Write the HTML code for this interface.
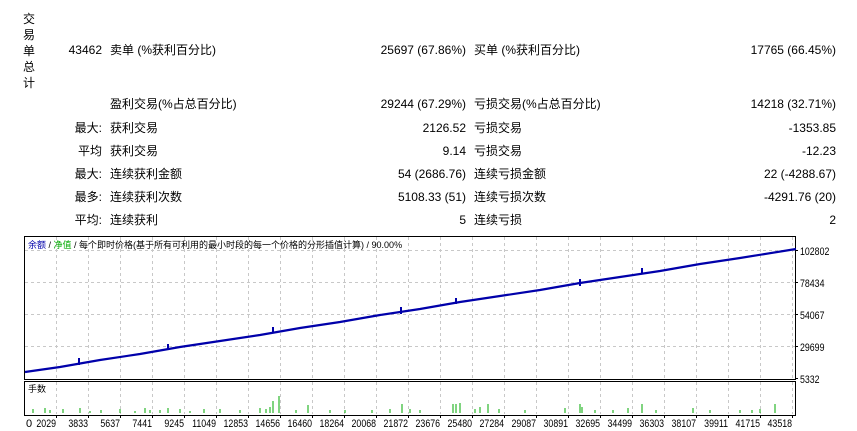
<!DOCTYPE html>
<html><head><meta charset="utf-8"><style>
body{margin:0;width:857px;height:431px;background:#fff;font-family:"Liberation Sans","Noto Sans CJK SC",sans-serif;font-size:12px;color:#000;position:relative;overflow:hidden}
.t{position:absolute;white-space:nowrap;line-height:14px}
.r{text-align:right}
.v{position:absolute;left:23px;top:11px;width:14px;line-height:16px;font-size:12px}
.x{position:absolute;top:0;width:60px;text-align:right;transform:scaleX(.8);transform-origin:right center}
.y{position:absolute;left:800px;font-size:11px;line-height:14px;transform:scaleX(.8);transform-origin:left center}
</style></head><body>
<div class="v">交<br>易<br>单<br>总<br>计</div>
<div class="t r" style="right:755px;top:43px">43462</div>
<div class="t" style="left:110px;top:43px">卖单 (%获利百分比)</div>
<div class="t r" style="right:391px;top:43px">25697 (67.86%)</div>
<div class="t" style="left:474px;top:43px">买单 (%获利百分比)</div>
<div class="t r" style="right:21px;top:43px">17765 (66.45%)</div>

<div class="t" style="left:110px;top:97px">盈利交易(%占总百分比)</div>
<div class="t r" style="right:391px;top:97px">29244 (67.29%)</div>
<div class="t" style="left:474px;top:97px">亏损交易(%占总百分比)</div>
<div class="t r" style="right:21px;top:97px">14218 (32.71%)</div>

<div class="t r" style="right:755px;top:121px">最大:</div>
<div class="t" style="left:110px;top:121px">获利交易</div>
<div class="t r" style="right:391px;top:121px">2126.52</div>
<div class="t" style="left:474px;top:121px">亏损交易</div>
<div class="t r" style="right:21px;top:121px">-1353.85</div>

<div class="t r" style="right:755px;top:144px">平均</div>
<div class="t" style="left:110px;top:144px">获利交易</div>
<div class="t r" style="right:391px;top:144px">9.14</div>
<div class="t" style="left:474px;top:144px">亏损交易</div>
<div class="t r" style="right:21px;top:144px">-12.23</div>

<div class="t r" style="right:755px;top:167px">最大:</div>
<div class="t" style="left:110px;top:167px">连续获利金额</div>
<div class="t r" style="right:391px;top:167px">54 (2686.76)</div>
<div class="t" style="left:474px;top:167px">连续亏损金额</div>
<div class="t r" style="right:21px;top:167px">22 (-4288.67)</div>

<div class="t r" style="right:755px;top:190px">最多:</div>
<div class="t" style="left:110px;top:190px">连续获利次数</div>
<div class="t r" style="right:391px;top:190px">5108.33 (51)</div>
<div class="t" style="left:474px;top:190px">连续亏损次数</div>
<div class="t r" style="right:21px;top:190px">-4291.76 (20)</div>

<div class="t r" style="right:755px;top:213px">平均:</div>
<div class="t" style="left:110px;top:213px">连续获利</div>
<div class="t r" style="right:391px;top:213px">5</div>
<div class="t" style="left:474px;top:213px">连续亏损</div>
<div class="t r" style="right:21px;top:213px">2</div>

<svg style="position:absolute;left:0;top:0" width="857" height="431">
<g stroke="#c8c8c8" stroke-dasharray="3,3" stroke-width="1">
<path d="M25 250.5H795M25 282.5H795M25 314.5H795M25 346.5H795"/>
<path d="M56.5 237V379M88.5 237V379M120.5 237V379M152.5 237V379M184.5 237V379M216.5 237V379M248.5 237V379M280.5 237V379M312.5 237V379M344.5 237V379M376.5 237V379M408.5 237V379M440.5 237V379M472.5 237V379M504.5 237V379M536.5 237V379M568.5 237V379M600.5 237V379M632.5 237V379M664.5 237V379M696.5 237V379M728.5 237V379M760.5 237V379M792.5 237V379"/>
<path d="M56.5 382V414M88.5 382V414M120.5 382V414M152.5 382V414M184.5 382V414M216.5 382V414M248.5 382V414M280.5 382V414M312.5 382V414M344.5 382V414M376.5 382V414M408.5 382V414M440.5 382V414M472.5 382V414M504.5 382V414M536.5 382V414M568.5 382V414M600.5 382V414M632.5 382V414M664.5 382V414M696.5 382V414M728.5 382V414M760.5 382V414M792.5 382V414"/>
</g>
<rect x="24.5" y="236.5" width="771" height="143" fill="none" stroke="#000"/>
<rect x="24.5" y="381.5" width="771" height="34" fill="none" stroke="#000"/>
<path d="M796 250.5h2M796 282.5h2M796 314.5h2M796 346.5h2M796 378.5h2" stroke="#000"/>
<path d="M56.5 416v2M88.5 416v2M120.5 416v2M152.5 416v2M184.5 416v2M216.5 416v2M248.5 416v2M280.5 416v2M312.5 416v2M344.5 416v2M376.5 416v2M408.5 416v2M440.5 416v2M472.5 416v2M504.5 416v2M536.5 416v2M568.5 416v2M600.5 416v2M632.5 416v2M664.5 416v2M696.5 416v2M728.5 416v2M760.5 416v2M792.5 416v2" stroke="#000"/>
<polyline fill="none" stroke="#0000aa" stroke-width="2.2" points="25,372 60,367 100,360 140,354 180,347 220,341 260,335 300,328 340,322 380,315 420,309 460,302 500,296 540,290 580,283 620,277 660,271 700,264 740,258 796,249"/>
<path d="M79 358v7M168 344v6M273 327v6M401 307v7M456 298v6M580 279v7M642 268v5" stroke="#0000aa" stroke-width="2"/>
<g stroke="#00aa00" stroke-width="1">
<path d="M33 413v-4M45 413v-5M50 413v-3M63 413v-4M80 413v-5M90 413v-2M101 413v-3M120 413v-4M135 413v-2M145 413v-5M150 413v-3M160 413v-3M168 413v-5M180 413v-4M190 413v-2M204 413v-4M220 413v-4M240 413v-3M260 413v-5M266 413v-4M270 413v-6M273 413v-12M279 413v-17M296 413v-3M308 413v-8M330 413v-3M345 413v-3M372 413v-3M390 413v-4M402 413v-9M410 413v-4M420 413v-3M453 413v-9M456 413v-9M460 413v-10M475 413v-4M480 413v-6M488 413v-9M499 413v-4M525 413v-3M565 413v-5M580 413v-9M582 413v-6M595 413v-3M613 413v-3M628 413v-5M642 413v-9M656 413v-3M693 413v-5M710 413v-3M740 413v-3M752 413v-3M760 413v-4M775 413v-9"/>
</g>
</svg>
<div class="t" style="left:28px;top:239px;font-size:9px;line-height:12px"><span style="color:#0000aa">余额</span> / <span style="color:#00aa00">净值</span> / 每个即时价格(基于所有可利用的最小时段的每一个价格的分形插值计算) / 90.00%</div>
<div class="t" style="left:28px;top:383px;font-size:9px;line-height:12px">手数</div>
<div class="y" style="top:245px">102802</div>
<div class="y" style="top:277px">78434</div>
<div class="y" style="top:309px">54067</div>
<div class="y" style="top:341px">29699</div>
<div class="y" style="top:373px">5332</div>
<div class="t" style="left:0;top:417px;font-size:11px;width:857px;height:14px">
<span style="position:absolute;left:26px">0</span>
<span class="x" style="left:-4px">2029</span><span class="x" style="left:28px">3833</span><span class="x" style="left:60px">5637</span><span class="x" style="left:92px">7441</span><span class="x" style="left:124px">9245</span><span class="x" style="left:156px">11049</span><span class="x" style="left:188px">12853</span><span class="x" style="left:220px">14656</span><span class="x" style="left:252px">16460</span><span class="x" style="left:284px">18264</span><span class="x" style="left:316px">20068</span><span class="x" style="left:348px">21872</span><span class="x" style="left:380px">23676</span><span class="x" style="left:412px">25480</span><span class="x" style="left:444px">27284</span><span class="x" style="left:476px">29087</span><span class="x" style="left:508px">30891</span><span class="x" style="left:540px">32695</span><span class="x" style="left:572px">34499</span><span class="x" style="left:604px">36303</span><span class="x" style="left:636px">38107</span><span class="x" style="left:668px">39911</span><span class="x" style="left:700px">41715</span><span class="x" style="left:732px">43518</span>
</div>
</body></html>
